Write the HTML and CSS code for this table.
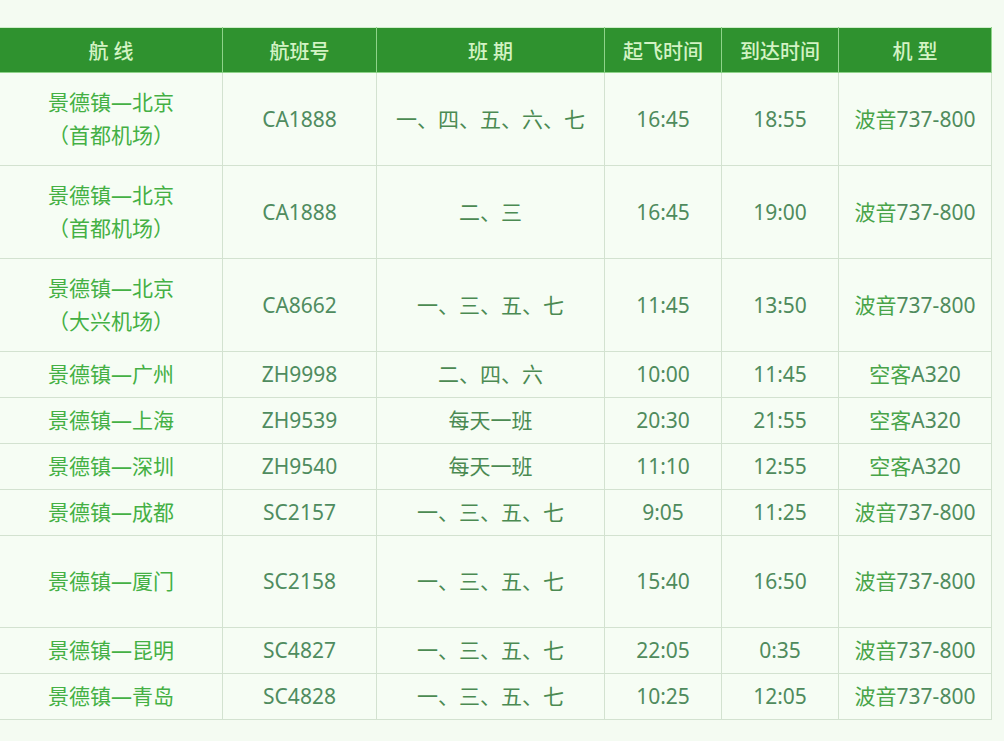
FILE: index.html
```html
<!DOCTYPE html>
<html lang="zh-CN">
<head>
<meta charset="utf-8">
<title>景德镇航线时刻表</title>
<link rel="stylesheet" href="styles.css">
</head>
<body>
<table class="sched">
  <colgroup>
    <col class="c-route"><col class="c-no"><col class="c-days"><col class="c-dep"><col class="c-arr"><col class="c-type">
  </colgroup>
  <thead>
    <tr><th>航 线</th><th>航班号</th><th>班 期</th><th>起飞时间</th><th>到达时间</th><th>机 型</th></tr>
  </thead>
  <tbody>
    <tr class="tall"><td class="route">景德镇—北京<br>（首都机场）</td><td class="no">CA1888</td><td class="days">一、四、五、六、七</td><td class="time">16:45</td><td class="time">18:55</td><td class="type"><span class="cn">波音</span>737-800</td></tr>
    <tr class="tall"><td class="route">景德镇—北京<br>（首都机场）</td><td class="no">CA1888</td><td class="days">二、三</td><td class="time">16:45</td><td class="time">19:00</td><td class="type"><span class="cn">波音</span>737-800</td></tr>
    <tr class="tall"><td class="route">景德镇—北京<br>（大兴机场）</td><td class="no">CA8662</td><td class="days">一、三、五、七</td><td class="time">11:45</td><td class="time">13:50</td><td class="type"><span class="cn">波音</span>737-800</td></tr>
    <tr class="short"><td class="route">景德镇—广州</td><td class="no">ZH9998</td><td class="days">二、四、六</td><td class="time">10:00</td><td class="time">11:45</td><td class="type"><span class="cn">空客</span>A320</td></tr>
    <tr class="short"><td class="route">景德镇—上海</td><td class="no">ZH9539</td><td class="days">每天一班</td><td class="time">20:30</td><td class="time">21:55</td><td class="type"><span class="cn">空客</span>A320</td></tr>
    <tr class="short"><td class="route">景德镇—深圳</td><td class="no">ZH9540</td><td class="days">每天一班</td><td class="time">11:10</td><td class="time">12:55</td><td class="type"><span class="cn">空客</span>A320</td></tr>
    <tr class="short"><td class="route">景德镇—成都</td><td class="no">SC2157</td><td class="days">一、三、五、七</td><td class="time">9:05</td><td class="time">11:25</td><td class="type"><span class="cn">波音</span>737-800</td></tr>
    <tr class="tall2"><td class="route">景德镇—厦门</td><td class="no">SC2158</td><td class="days">一、三、五、七</td><td class="time">15:40</td><td class="time">16:50</td><td class="type"><span class="cn">波音</span>737-800</td></tr>
    <tr class="short"><td class="route">景德镇—昆明</td><td class="no">SC4827</td><td class="days">一、三、五、七</td><td class="time">22:05</td><td class="time">0:35</td><td class="type"><span class="cn">波音</span>737-800</td></tr>
    <tr class="short"><td class="route">景德镇—青岛</td><td class="no">SC4828</td><td class="days">一、三、五、七</td><td class="time">10:25</td><td class="time">12:05</td><td class="type"><span class="cn">波音</span>737-800</td></tr>
  </tbody>
</table>
</body>
</html>
```

FILE: styles.css
```css
html, body {
  margin: 0;
  padding: 0;
  background: #f4fbf2;
}
body {
  padding-top: 27px;
  font-family: "Noto Sans", "Noto Sans CJK SC", sans-serif;
  font-size: 21px;
}
.sched {
  border-collapse: collapse;
  table-layout: fixed;
  width: 992px;
  margin-left: -1px;
}
.c-route { width: 223px; }
.c-no { width: 154px; }
.c-days { width: 228px; }
.c-dep { width: 117px; }
.c-arr { width: 117px; }
.c-type { width: 153px; }

.sched th {
  background: #2f922f;
  color: #d3f3c4;
  font-weight: 500;
  height: 44px;
  padding: 0;
  text-align: center;
  vertical-align: middle;
  border: 1px solid #8fd38a;
  border-top-color: #cfeccb;
  font-size: 20px;
}
.sched td {
  padding: 0;
  text-align: center;
  vertical-align: middle;
  border: 1px solid #d3e2d0;
  line-height: 33px;
  background: #f6fdf4;
}
.sched tr.tall td { height: 92px; }
.sched tr.tall2 td { height: 91px; }
.sched tr.short td { height: 45px; }

.route { color: #44b044; }
.no { color: #4f8c5f; }
.days { color: #4b8a52; }
.time { color: #4f8b5d; }
.type { color: #4f8b5d; }
.type .cn { color: #48a448; }
```
